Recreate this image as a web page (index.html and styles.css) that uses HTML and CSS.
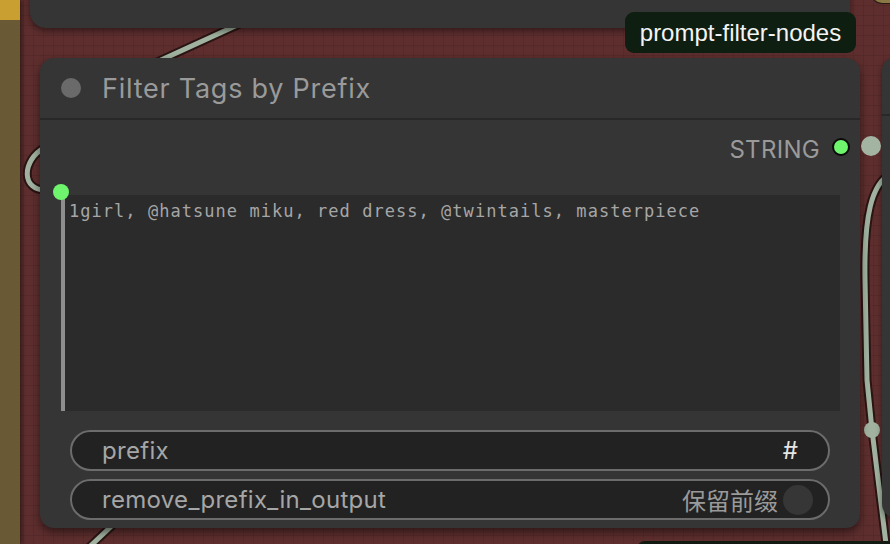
FILE: index.html
```html
<!DOCTYPE html>
<html>
<head>
<meta charset="utf-8">
<link rel="stylesheet" href="styles.css">
</head>
<body>
<div class="canvas">
  <div class="side-strip"><div class="side-top"></div></div>
  <div class="corner-node"></div>
  <svg class="wires" width="890" height="544" viewBox="0 0 890 544">
    <g fill="none" stroke-linecap="round">
      <path class="wire-outline" d="M113 82 L255 17"/>
      <path class="wire" d="M113 82 L255 17"/>
      <path class="wire-outline" d="M44 148 C22 160, 20 192, 48 190"/>
      <path class="wire" d="M44 148 C22 160, 20 192, 48 190"/>
      <path class="wire-outline" d="M118 520 L84 552"/>
      <path class="wire" d="M118 520 L84 552"/>
      <path class="wire-outline" d="M895 172 C870 180, 864 220, 865 280 L867 380 L872 430 L887 552"/>
      <path class="wire" d="M895 172 C870 180, 864 220, 865 280 L867 380 L872 430 L887 552"/>
    </g>
    <circle cx="872" cy="430" r="8" class="dot"/>
  </svg>
  <div class="top-node"></div>
  <div class="right-node"><div class="right-head"></div></div>
  <div class="bottom-node"></div>

  <div class="node">
    <div class="node-head">
      <span class="head-dot"></span>
      <span class="node-title">Filter Tags by Prefix</span>
    </div>
    <div class="node-body">
      <div class="out-row">
        <span class="slot-label">STRING</span>
        <span class="slot-dot"></span>
      </div>
      <div class="textarea">1girl, @hatsune miku, red dress, @twintails, masterpiece</div>
      <div class="widgets">
        <div class="pill">
          <span class="pill-label">prefix</span>
          <span class="pill-value">#</span>
        </div>
        <div class="pill">
          <span class="pill-label">remove_prefix_in_output</span>
          <span class="pill-toggle">
            <span class="toggle-text">保留前缀</span>
            <span class="toggle-knob"></span>
          </span>
        </div>
      </div>
    </div>
    <span class="in-dot"></span>
  </div>

  <svg class="link-end" width="24" height="24" viewBox="0 0 24 24">
    <circle cx="12" cy="12" r="10" fill="#a3b4a3"/>
  </svg>
  <div class="badge">prompt-filter-nodes</div>
</div>
</body>
</html>
```
FILE: styles.css
```css
html, body {
  margin: 0;
  padding: 0;
  background: #5e2e2e;
}
.canvas {
  position: relative;
  width: 890px;
  height: 544px;
  overflow: hidden;
  background-color: #5e2e2e;
  background-image:
    linear-gradient(rgba(0,0,0,0.08) 1px, transparent 1px),
    linear-gradient(90deg, rgba(0,0,0,0.08) 1px, transparent 1px);
  background-size: 10px 10px;
  background-position: 3px 5px;
  font-family: Inter, "Noto Sans CJK SC", sans-serif;
}
.side-strip {
  position: absolute;
  left: 0;
  top: 0;
  width: 20px;
  height: 544px;
  background: #6a5935;
  box-shadow: 2px 0 4px rgba(0,0,0,0.45);
}
.side-top {
  height: 20px;
  background: #c89f30;
}
.corner-node {
  position: absolute;
  left: 872px;
  top: -30px;
  width: 60px;
  height: 33px;
  border-radius: 10px;
  background: #8a7845;
  box-shadow: 0 0 0 1px #2a1a14;
}
.wires {
  position: absolute;
  left: 0;
  top: 0;
}
.wire-outline {
  stroke: #2a1414;
  stroke-width: 9;
}
.wire {
  stroke: #a1b3a0;
  stroke-width: 5;
}
.dot {
  fill: #a1b3a0;
}
.top-node {
  position: absolute;
  left: 30px;
  top: -40px;
  width: 820px;
  height: 68px;
  border-radius: 16px;
  background: #353535;
  box-shadow: 0 3px 6px rgba(0,0,0,0.45);
}
.right-node {
  position: absolute;
  left: 882px;
  top: 57px;
  width: 60px;
  height: 461px;
  border-radius: 14px;
  background: #353535;
  box-shadow: 0 3px 6px rgba(0,0,0,0.45);
}
.right-head {
  height: 57px;
  border-bottom: 2px solid #282828;
}
.bottom-node {
  position: absolute;
  left: 637px;
  top: 541px;
  width: 300px;
  height: 40px;
  border-radius: 8px;
  background: #121a12;
}
.node {
  position: absolute;
  left: 40px;
  top: 58px;
  width: 820px;
  border-radius: 14px;
  background: #353535;
  box-shadow: 0 4px 8px rgba(0,0,0,0.5);
  display: flex;
  flex-direction: column;
}
.node-head {
  height: 60px;
  border-bottom: 2px solid #282828;
  display: flex;
  align-items: center;
  padding-left: 21px;
  gap: 21px;
}
.head-dot {
  width: 20px;
  height: 20px;
  border-radius: 50%;
  background: #6a6a6a;
}
.node-title {
  font-size: 27px;
  color: #9a9a9a;
  letter-spacing: 0.75px;
}
.node-body {
  display: flex;
  flex-direction: column;
  padding-bottom: 8px;
}
.out-row {
  height: 56px;
  display: flex;
  align-items: center;
  justify-content: flex-end;
  padding-right: 10px;
  gap: 12px;
}
.slot-label {
  font-size: 24px;
  color: #9a9a9a;
  margin-top: 2px;
  letter-spacing: 0.3px;
}
.slot-dot {
  width: 14px;
  height: 14px;
  border-radius: 50%;
  background: #6ff56d;
  border: 2px solid #0a0a0a;
  margin-top: -2px;
}
.textarea {
  margin: 19px 20px 0 21px;
  height: 216px;
  box-sizing: border-box;
  background: #2b2b2b;
  border-left: 4px solid #8e8e8e;
  padding: 6px 4px;
  font-family: "DejaVu Sans Mono", monospace;
  font-size: 17px;
  letter-spacing: 1.04px;
  color: #a6a6a6;
  white-space: pre;
  overflow: hidden;
}
.widgets {
  margin: 19px 30px 0 30px;
  display: flex;
  flex-direction: column;
  gap: 8px;
}
.pill {
  height: 41px;
  box-sizing: border-box;
  border: 2px solid #6c6c6c;
  border-radius: 21px;
  background: #222222;
  display: flex;
  align-items: center;
  justify-content: space-between;
  padding: 0 30px 0 30px;
}
.pill-label {
  font-size: 24px;
  color: #a6a6a6;
  letter-spacing: 0.3px;
}
.pill-value {
  font-size: 24px;
  color: #e6e6e6;
}
.pill-toggle {
  display: flex;
  align-items: center;
  gap: 5px;
  margin-right: -15px;
}
.toggle-text {
  font-size: 24px;
  color: #9a9a9a;
  font-family: "Noto Sans CJK SC", sans-serif;
}
.toggle-knob {
  width: 30px;
  height: 30px;
  border-radius: 50%;
  background: #363636;
}
.in-dot {
  position: absolute;
  left: 13px;
  top: 126px;
  width: 16px;
  height: 16px;
  border-radius: 50%;
  background: #6ff56d;
}
.link-end {
  position: absolute;
  left: 859px;
  top: 134px;
}
.badge {
  position: absolute;
  left: 625px;
  top: 12px;
  width: 231px;
  height: 41px;
  box-sizing: border-box;
  border-radius: 9px;
  background: #0e1e10;
  color: #f4f4f4;
  font-family: "Liberation Sans", Arial, sans-serif;
  font-size: 24px;
  display: flex;
  align-items: center;
  justify-content: center;
}
```
